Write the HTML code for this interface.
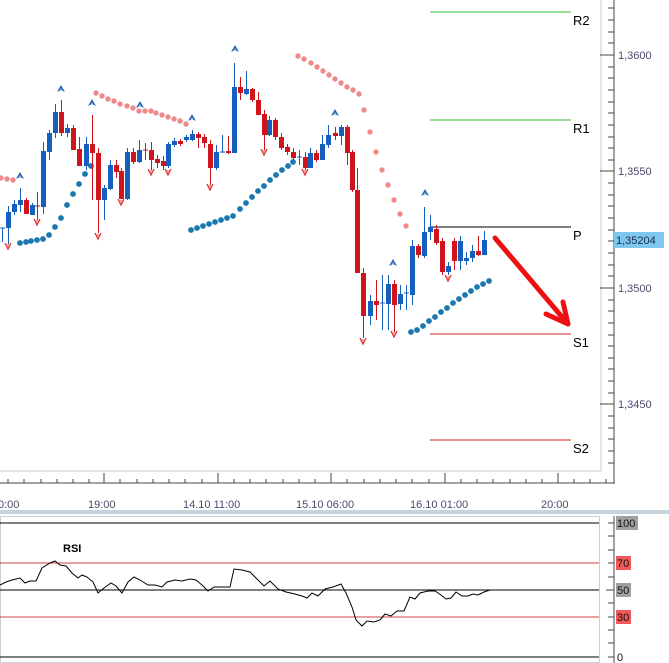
<!DOCTYPE html>
<html><head><meta charset="utf-8"><style>
html,body{margin:0;padding:0;background:#fff;width:669px;height:663px;overflow:hidden}
svg{display:block}
text{font-family:"Liberation Sans",sans-serif}
</style></head><body>
<svg width="669" height="663" viewBox="0 0 669 663" xmlns="http://www.w3.org/2000/svg">
<defs>
<g id="dn"><path d="M-3,-5 L0,1 L3,-5" fill="none" stroke="#e03030" stroke-width="1.3"/><path d="M-2,-4 L0,-1 L2,-4" fill="#f3a0a0"/></g>
<g id="up"><path d="M-4,3 L0,-4 L4,3 L0,1 Z" fill="#2a62b8"/><path d="M-1,1 L0,-1 L1,1" fill="#9cc4ee"/></g>
</defs>
<line x1="601" y1="0" x2="601" y2="471" stroke="#c8c8c8"/>
<line x1="0" y1="471" x2="601" y2="471" stroke="#c8c8c8"/>
<line x1="614" y1="0" x2="614" y2="484" stroke="#444"/>
<g stroke="#444">
<line x1="600" y1="55" x2="614" y2="55"/><line x1="600" y1="171" x2="614" y2="171"/><line x1="600" y1="288" x2="614" y2="288"/><line x1="600" y1="404" x2="614" y2="404"/>
<line x1="608" y1="8" x2="614" y2="8"/><line x1="608" y1="20" x2="614" y2="20"/><line x1="608" y1="32" x2="614" y2="32"/><line x1="608" y1="43" x2="614" y2="43"/>
<line x1="608" y1="67" x2="614" y2="67"/><line x1="608" y1="78" x2="614" y2="78"/><line x1="608" y1="90" x2="614" y2="90"/><line x1="608" y1="102" x2="614" y2="102"/><line x1="608" y1="113" x2="614" y2="113"/><line x1="608" y1="125" x2="614" y2="125"/><line x1="608" y1="137" x2="614" y2="137"/><line x1="608" y1="148" x2="614" y2="148"/><line x1="608" y1="160" x2="614" y2="160"/>
<line x1="608" y1="183" x2="614" y2="183"/><line x1="608" y1="195" x2="614" y2="195"/><line x1="608" y1="206" x2="614" y2="206"/><line x1="608" y1="218" x2="614" y2="218"/><line x1="608" y1="230" x2="614" y2="230"/><line x1="608" y1="241" x2="614" y2="241"/><line x1="608" y1="253" x2="614" y2="253"/><line x1="608" y1="265" x2="614" y2="265"/><line x1="608" y1="276" x2="614" y2="276"/>
<line x1="608" y1="300" x2="614" y2="300"/><line x1="608" y1="311" x2="614" y2="311"/><line x1="608" y1="323" x2="614" y2="323"/><line x1="608" y1="335" x2="614" y2="335"/><line x1="608" y1="346" x2="614" y2="346"/><line x1="608" y1="358" x2="614" y2="358"/><line x1="608" y1="369" x2="614" y2="369"/><line x1="608" y1="381" x2="614" y2="381"/><line x1="608" y1="393" x2="614" y2="393"/>
<line x1="608" y1="416" x2="614" y2="416"/><line x1="608" y1="428" x2="614" y2="428"/><line x1="608" y1="439" x2="614" y2="439"/><line x1="608" y1="451" x2="614" y2="451"/><line x1="608" y1="463" x2="614" y2="463"/>
</g>
<g font-size="11" fill="#4a4a70">
<text x="618" y="59">1,3600</text><text x="618" y="175">1,3550</text><text x="618" y="292">1,3500</text><text x="618" y="408">1,3450</text>
</g>
<rect x="614" y="232" width="50" height="16" fill="#7ec8f0"/>
<text x="616" y="244" font-size="11" fill="#1a2a50">1,35204</text>
<line x1="0" y1="483" x2="614" y2="483" stroke="#444"/>
<g stroke="#444">
<line x1="104" y1="473" x2="104" y2="483"/><line x1="218" y1="473" x2="218" y2="483"/><line x1="331" y1="473" x2="331" y2="483"/><line x1="445" y1="473" x2="445" y2="483"/><line x1="558" y1="473" x2="558" y2="483"/><line x1="614" y1="473" x2="614" y2="483"/>
<line x1="8" y1="479" x2="8" y2="483"/><line x1="24" y1="479" x2="24" y2="483"/><line x1="41" y1="479" x2="41" y2="483"/><line x1="57" y1="479" x2="57" y2="483"/><line x1="73" y1="479" x2="73" y2="483"/><line x1="89" y1="479" x2="89" y2="483"/>
<line x1="120" y1="479" x2="120" y2="483"/><line x1="137" y1="479" x2="137" y2="483"/><line x1="153" y1="479" x2="153" y2="483"/><line x1="169" y1="479" x2="169" y2="483"/><line x1="185" y1="479" x2="185" y2="483"/><line x1="202" y1="479" x2="202" y2="483"/>
<line x1="234" y1="479" x2="234" y2="483"/><line x1="250" y1="479" x2="250" y2="483"/><line x1="266" y1="479" x2="266" y2="483"/><line x1="283" y1="479" x2="283" y2="483"/><line x1="299" y1="479" x2="299" y2="483"/><line x1="315" y1="479" x2="315" y2="483"/>
<line x1="347" y1="479" x2="347" y2="483"/><line x1="364" y1="479" x2="364" y2="483"/><line x1="380" y1="479" x2="380" y2="483"/><line x1="396" y1="479" x2="396" y2="483"/><line x1="412" y1="479" x2="412" y2="483"/><line x1="429" y1="479" x2="429" y2="483"/>
<line x1="461" y1="479" x2="461" y2="483"/><line x1="477" y1="479" x2="477" y2="483"/><line x1="493" y1="479" x2="493" y2="483"/><line x1="510" y1="479" x2="510" y2="483"/><line x1="526" y1="479" x2="526" y2="483"/><line x1="542" y1="479" x2="542" y2="483"/>
<line x1="574" y1="479" x2="574" y2="483"/><line x1="590" y1="479" x2="590" y2="483"/><line x1="606" y1="479" x2="606" y2="483"/>
</g>
<g font-size="11" fill="#4a4a70">
<text x="-2" y="508">0:00</text><text x="88" y="508">19:00</text><text x="183" y="508">14.10 11:00</text><text x="296" y="508">15.10 06:00</text><text x="410" y="508">16.10 01:00</text><text x="541" y="508">20:00</text>
</g>
<rect x="0" y="510" width="669" height="4" fill="#c8d2dc"/>

<line x1="430" y1="12" x2="571" y2="12" stroke="#30c030"/>
<line x1="430" y1="120" x2="571" y2="120" stroke="#30c030"/>
<line x1="430" y1="227" x2="571" y2="227" stroke="#000"/>
<line x1="430" y1="334" x2="571" y2="334" stroke="#d02020"/>
<line x1="430" y1="440" x2="571" y2="440" stroke="#d02020"/>
<g font-size="13" fill="#000">
<text x="573" y="25">R2</text><text x="573" y="133">R1</text><text x="573" y="240">P</text><text x="573" y="347">S1</text><text x="573" y="453">S2</text>
</g>

<g fill="#f08a8a">
<circle cx="1" cy="178" r="2.7"/><circle cx="7" cy="179" r="2.7"/><circle cx="13" cy="180" r="2.7"/>
<circle cx="96" cy="93" r="2.7"/><circle cx="102" cy="96" r="2.7"/><circle cx="108" cy="99" r="2.7"/><circle cx="114" cy="101" r="2.7"/><circle cx="120" cy="104" r="2.7"/><circle cx="127" cy="106" r="2.7"/><circle cx="133" cy="108" r="2.7"/><circle cx="139" cy="111" r="2.7"/><circle cx="145" cy="111" r="2.7"/><circle cx="151" cy="111" r="2.7"/><circle cx="156" cy="113" r="2.7"/><circle cx="162" cy="115" r="2.7"/><circle cx="168" cy="117" r="2.7"/><circle cx="174" cy="119" r="2.7"/><circle cx="180" cy="121" r="2.7"/><circle cx="186" cy="124" r="2.7"/>
<circle cx="298" cy="56" r="2.7"/><circle cx="304" cy="59" r="2.7"/><circle cx="311" cy="63" r="2.7"/><circle cx="317" cy="67" r="2.7"/><circle cx="323" cy="71" r="2.7"/><circle cx="329" cy="75" r="2.7"/><circle cx="335" cy="79" r="2.7"/><circle cx="341" cy="83" r="2.7"/><circle cx="347" cy="87" r="2.7"/><circle cx="353" cy="90" r="2.7"/><circle cx="359" cy="94" r="2.7"/>
<circle cx="364" cy="110" r="2.7"/><circle cx="370" cy="132" r="2.7"/><circle cx="376" cy="152" r="2.7"/><circle cx="382" cy="170" r="2.7"/><circle cx="388" cy="185" r="2.7"/><circle cx="394" cy="200" r="2.7"/><circle cx="400" cy="214" r="2.7"/><circle cx="406" cy="226" r="2.7"/>
</g>
<g fill="#1a78b0">
<circle cx="20" cy="243" r="2.9"/><circle cx="26" cy="242" r="2.9"/><circle cx="31" cy="241" r="2.9"/><circle cx="37" cy="240" r="2.9"/><circle cx="43" cy="239" r="2.9"/><circle cx="49" cy="235" r="2.9"/><circle cx="55" cy="227" r="2.9"/><circle cx="61" cy="218" r="2.9"/><circle cx="67" cy="205" r="2.9"/><circle cx="73" cy="194" r="2.9"/><circle cx="79" cy="184" r="2.9"/><circle cx="85" cy="174" r="2.9"/><circle cx="91" cy="166" r="2.9"/>
<circle cx="191" cy="230" r="2.9"/><circle cx="197" cy="228" r="2.9"/><circle cx="203" cy="226" r="2.9"/><circle cx="209" cy="224" r="2.9"/><circle cx="215" cy="222" r="2.9"/><circle cx="221" cy="220" r="2.9"/><circle cx="227" cy="218" r="2.9"/><circle cx="233" cy="216" r="2.9"/><circle cx="240" cy="209" r="2.9"/><circle cx="246" cy="203" r="2.9"/><circle cx="252" cy="197" r="2.9"/><circle cx="258" cy="191" r="2.9"/><circle cx="264" cy="186" r="2.9"/><circle cx="270" cy="180" r="2.9"/><circle cx="276" cy="175" r="2.9"/><circle cx="282" cy="170" r="2.9"/><circle cx="288" cy="166" r="2.9"/><circle cx="293" cy="162" r="2.9"/>
<circle cx="411" cy="332" r="2.9"/><circle cx="417" cy="330" r="2.9"/><circle cx="423" cy="326" r="2.9"/><circle cx="429" cy="321" r="2.9"/><circle cx="435" cy="317" r="2.9"/><circle cx="441" cy="312" r="2.9"/><circle cx="447" cy="308" r="2.9"/><circle cx="453" cy="303" r="2.9"/><circle cx="459" cy="299" r="2.9"/><circle cx="465" cy="295" r="2.9"/><circle cx="471" cy="291" r="2.9"/><circle cx="477" cy="287" r="2.9"/><circle cx="483" cy="284" r="2.9"/><circle cx="489" cy="281" r="2.9"/>
</g>

<g stroke="#1560bd" fill="#1560bd">
<line x1="2.5" y1="228" x2="2.5" y2="242"/><line x1="0" y1="228" x2="5" y2="228"/>
<line x1="8.5" y1="206" x2="8.5" y2="245"/><rect x="6" y="212" width="5" height="16" stroke="none"/>
<line x1="14.5" y1="200" x2="14.5" y2="215"/><rect x="12" y="204" width="5" height="8" stroke="none"/>
<line x1="20.5" y1="188" x2="20.5" y2="212"/><rect x="18" y="200" width="5" height="5" stroke="none"/>
<line x1="32.5" y1="203" x2="32.5" y2="215"/><rect x="30" y="205" width="5" height="10" stroke="none"/>
<line x1="43.5" y1="142" x2="43.5" y2="214"/><rect x="41" y="151" width="5" height="56" stroke="none"/>
<line x1="49.5" y1="130" x2="49.5" y2="160"/><rect x="47" y="133" width="5" height="19" stroke="none"/>
<line x1="55.5" y1="104" x2="55.5" y2="138"/><rect x="53" y="112" width="5" height="21" stroke="none"/>
<line x1="67.5" y1="124" x2="67.5" y2="137"/><rect x="65" y="128" width="5" height="5" stroke="none"/>
<line x1="86.5" y1="137" x2="86.5" y2="170"/><rect x="84" y="144" width="5" height="22" stroke="none"/>
<line x1="104.5" y1="185" x2="104.5" y2="220"/><rect x="102" y="188" width="5" height="12" stroke="none"/>
<line x1="110.5" y1="160" x2="110.5" y2="190"/><rect x="108" y="165" width="5" height="24" stroke="none"/>
<line x1="127.5" y1="148" x2="127.5" y2="200"/><rect x="125" y="152" width="5" height="47" stroke="none"/>
<line x1="139.5" y1="140" x2="139.5" y2="163"/><rect x="137" y="150" width="5" height="12" stroke="none"/>
<line x1="168.5" y1="142" x2="168.5" y2="168"/><rect x="166" y="144" width="5" height="22" stroke="none"/>
<line x1="174.5" y1="138" x2="174.5" y2="147"/><rect x="172" y="141" width="5" height="4" stroke="none"/>
<line x1="186.5" y1="135" x2="186.5" y2="142"/><rect x="184" y="137" width="5" height="3" stroke="none"/>
<line x1="192.5" y1="130" x2="192.5" y2="141"/><rect x="190" y="134" width="5" height="6" stroke="none"/>
<line x1="216.5" y1="145" x2="216.5" y2="170"/><rect x="214" y="152" width="5" height="16" stroke="none"/>
<line x1="222.5" y1="135" x2="222.5" y2="153"/><line x1="220" y1="152" x2="225" y2="152"/>
<line x1="234.5" y1="63" x2="234.5" y2="153"/><rect x="232" y="87" width="5" height="66" stroke="none"/>
<line x1="246.5" y1="71" x2="246.5" y2="95"/><rect x="244" y="89" width="5" height="5" stroke="none"/>
<line x1="269.5" y1="116" x2="269.5" y2="136"/><rect x="267" y="120" width="5" height="15" stroke="none"/>
<line x1="299.5" y1="150" x2="299.5" y2="165"/><line x1="297" y1="157" x2="302" y2="157"/>
<line x1="310.5" y1="148" x2="310.5" y2="168"/><rect x="308" y="153" width="5" height="15" stroke="none"/>
<line x1="322.5" y1="135" x2="322.5" y2="160"/><rect x="320" y="144" width="5" height="16" stroke="none"/>
<line x1="328.5" y1="125" x2="328.5" y2="148"/><rect x="326" y="135" width="5" height="10" stroke="none"/>
<line x1="341.5" y1="125" x2="341.5" y2="145"/><rect x="339" y="127" width="5" height="9" stroke="none"/>
<line x1="370.5" y1="295" x2="370.5" y2="325"/><rect x="368" y="301" width="5" height="15" stroke="none"/>
<line x1="382.5" y1="275" x2="382.5" y2="330"/><line x1="380" y1="303" x2="385" y2="303"/>
<line x1="388.5" y1="275" x2="388.5" y2="330"/><rect x="386" y="284" width="5" height="20" stroke="none"/>
<line x1="400.5" y1="285" x2="400.5" y2="310"/><rect x="398" y="294" width="5" height="10" stroke="none"/>
<line x1="406.5" y1="285" x2="406.5" y2="310"/><line x1="404" y1="293" x2="409" y2="293"/>
<line x1="412.5" y1="240" x2="412.5" y2="305"/><rect x="410" y="246" width="5" height="49" stroke="none"/>
<line x1="424.5" y1="207" x2="424.5" y2="258"/><rect x="422" y="232" width="5" height="24" stroke="none"/>
<line x1="430.5" y1="215" x2="430.5" y2="240"/><rect x="428" y="227" width="5" height="5" stroke="none"/>
<line x1="448.5" y1="262" x2="448.5" y2="275"/><rect x="446" y="266" width="5" height="6" stroke="none"/>
<line x1="460.5" y1="236" x2="460.5" y2="270"/><rect x="458" y="241" width="5" height="20" stroke="none"/>
<line x1="466.5" y1="252" x2="466.5" y2="265"/><rect x="464" y="258" width="5" height="3" stroke="none"/>
<line x1="472.5" y1="245" x2="472.5" y2="262"/><rect x="470" y="251" width="5" height="7" stroke="none"/>
<line x1="484.5" y1="231" x2="484.5" y2="255"/><rect x="482" y="240" width="5" height="15" stroke="none"/>
</g>
<g stroke="#d0141c" fill="#d0141c">
<line x1="26.5" y1="198" x2="26.5" y2="214"/><rect x="24" y="200" width="5" height="14" stroke="none"/>
<line x1="37.5" y1="192" x2="37.5" y2="220"/><line x1="35" y1="206" x2="40" y2="206"/>
<line x1="61.5" y1="100" x2="61.5" y2="136"/><rect x="59" y="112" width="5" height="21" stroke="none"/>
<line x1="73.5" y1="125" x2="73.5" y2="150"/><rect x="71" y="128" width="5" height="22" stroke="none"/>
<line x1="79.5" y1="137" x2="79.5" y2="166"/><rect x="77" y="149" width="5" height="17" stroke="none"/>
<line x1="92.5" y1="115" x2="92.5" y2="200"/><rect x="90" y="144" width="5" height="9" stroke="none"/>
<line x1="98.5" y1="148" x2="98.5" y2="233"/><rect x="96" y="153" width="5" height="47" stroke="none"/>
<line x1="116.5" y1="160" x2="116.5" y2="178"/><rect x="114" y="165" width="5" height="7" stroke="none"/>
<line x1="121.5" y1="168" x2="121.5" y2="199"/><rect x="119" y="171" width="5" height="28" stroke="none"/>
<line x1="133.5" y1="148" x2="133.5" y2="164"/><rect x="131" y="152" width="5" height="10" stroke="none"/>
<line x1="145.5" y1="143" x2="145.5" y2="160"/><line x1="143" y1="150" x2="148" y2="150"/>
<line x1="151.5" y1="142" x2="151.5" y2="170"/><rect x="149" y="150" width="5" height="10" stroke="none"/>
<line x1="157.5" y1="155" x2="157.5" y2="168"/><rect x="155" y="159" width="5" height="4" stroke="none"/>
<line x1="163.5" y1="156" x2="163.5" y2="170"/><rect x="161" y="161" width="5" height="5" stroke="none"/>
<line x1="180.5" y1="139" x2="180.5" y2="146"/><rect x="178" y="141" width="5" height="3" stroke="none"/>
<line x1="198.5" y1="132" x2="198.5" y2="148"/><rect x="196" y="134" width="5" height="4" stroke="none"/>
<line x1="204.5" y1="134" x2="204.5" y2="148"/><rect x="202" y="137" width="5" height="6" stroke="none"/>
<line x1="210.5" y1="140" x2="210.5" y2="185"/><rect x="208" y="144" width="5" height="24" stroke="none"/>
<line x1="228.5" y1="136" x2="228.5" y2="154"/><rect x="226" y="151" width="5" height="2" stroke="none"/>
<line x1="240.5" y1="77" x2="240.5" y2="100"/><rect x="238" y="87" width="5" height="6" stroke="none"/>
<line x1="252.5" y1="88" x2="252.5" y2="102"/><rect x="250" y="89" width="5" height="11" stroke="none"/>
<line x1="258.5" y1="92" x2="258.5" y2="115"/><rect x="256" y="100" width="5" height="15" stroke="none"/>
<line x1="264.5" y1="110" x2="264.5" y2="150"/><rect x="262" y="114" width="5" height="21" stroke="none"/>
<line x1="275.5" y1="118" x2="275.5" y2="140"/><rect x="273" y="120" width="5" height="17" stroke="none"/>
<line x1="281.5" y1="133" x2="281.5" y2="150"/><rect x="279" y="137" width="5" height="11" stroke="none"/>
<line x1="287.5" y1="144" x2="287.5" y2="155"/><rect x="285" y="147" width="5" height="5" stroke="none"/>
<line x1="293.5" y1="148" x2="293.5" y2="160"/><rect x="291" y="152" width="5" height="6" stroke="none"/>
<line x1="305.5" y1="152" x2="305.5" y2="170"/><rect x="303" y="157" width="5" height="11" stroke="none"/>
<line x1="316.5" y1="150" x2="316.5" y2="162"/><rect x="314" y="153" width="5" height="7" stroke="none"/>
<line x1="335.5" y1="127" x2="335.5" y2="140"/><rect x="333" y="133" width="5" height="3" stroke="none"/>
<line x1="347.5" y1="125" x2="347.5" y2="165"/><rect x="345" y="127" width="5" height="26" stroke="none"/>
<line x1="352.5" y1="150" x2="352.5" y2="192"/><rect x="350" y="152" width="5" height="38" stroke="none"/>
<line x1="357.5" y1="168" x2="357.5" y2="273"/><rect x="355" y="190" width="5" height="83" stroke="none"/>
<line x1="363.5" y1="268" x2="363.5" y2="338"/><rect x="361" y="273" width="5" height="43" stroke="none"/>
<line x1="376.5" y1="280" x2="376.5" y2="320"/><rect x="374" y="301" width="5" height="4" stroke="none"/>
<line x1="394.5" y1="280" x2="394.5" y2="332"/><rect x="392" y="284" width="5" height="21" stroke="none"/>
<line x1="418.5" y1="244" x2="418.5" y2="258"/><rect x="416" y="246" width="5" height="9" stroke="none"/>
<line x1="436.5" y1="225" x2="436.5" y2="245"/><rect x="434" y="229" width="5" height="14" stroke="none"/>
<line x1="442.5" y1="238" x2="442.5" y2="275"/><rect x="440" y="241" width="5" height="31" stroke="none"/>
<line x1="454.5" y1="238" x2="454.5" y2="270"/><rect x="452" y="241" width="5" height="20" stroke="none"/>
<line x1="478.5" y1="236" x2="478.5" y2="256"/><rect x="476" y="251" width="5" height="4" stroke="none"/>
</g>
<use href="#dn" x="8" y="248"/><use href="#dn" x="37" y="224"/><use href="#dn" x="98" y="238"/><use href="#dn" x="121" y="204"/><use href="#dn" x="151" y="174"/><use href="#dn" x="168" y="174"/><use href="#dn" x="210" y="189"/><use href="#dn" x="264" y="154"/><use href="#dn" x="305" y="174"/><use href="#dn" x="363" y="343"/><use href="#dn" x="394" y="336"/><use href="#dn" x="448" y="280"/>
<use href="#up" x="61" y="89"/><use href="#up" x="92" y="103"/><use href="#up" x="140" y="105"/><use href="#up" x="192" y="118"/><use href="#up" x="235" y="49"/><use href="#up" x="20" y="176"/><use href="#up" x="335" y="113"/><use href="#up" x="393" y="263"/><use href="#up" x="425" y="193"/>

<g stroke="#ee1010" stroke-width="5" stroke-linecap="round" stroke-linejoin="round" fill="none">
<line x1="495" y1="238" x2="568" y2="324"/>
<polyline points="546,314 568,324 563,302"/>
</g>

<rect x="0.5" y="516.5" width="599" height="146" fill="none" stroke="#c8d0d8"/>
<line x1="0" y1="523" x2="599" y2="523" stroke="#000"/>
<line x1="0" y1="563" x2="599" y2="563" stroke="#d04040"/>
<line x1="0" y1="590" x2="599" y2="590" stroke="#000"/>
<line x1="0" y1="617" x2="599" y2="617" stroke="#d04040"/>
<line x1="0" y1="657" x2="599" y2="657" stroke="#000"/>
<line x1="614" y1="516" x2="614" y2="663" stroke="#444"/>
<g stroke="#444">
<line x1="608" y1="523" x2="614" y2="523"/><line x1="608" y1="536" x2="614" y2="536"/><line x1="608" y1="550" x2="614" y2="550"/><line x1="608" y1="563" x2="614" y2="563"/><line x1="608" y1="577" x2="614" y2="577"/><line x1="606" y1="590" x2="614" y2="590"/><line x1="608" y1="603" x2="614" y2="603"/><line x1="608" y1="617" x2="614" y2="617"/><line x1="608" y1="630" x2="614" y2="630"/><line x1="608" y1="643" x2="614" y2="643"/><line x1="608" y1="657" x2="614" y2="657"/>
</g>
<rect x="616" y="516" width="22" height="14" fill="#a0a0a0"/><text x="617" y="527" font-size="11" fill="#111">100</text>
<rect x="616" y="556" width="15" height="14" fill="#f05a5a"/><text x="617" y="567" font-size="11" fill="#111">70</text>
<rect x="616" y="583" width="15" height="14" fill="#a0a0a0"/><text x="617" y="594" font-size="11" fill="#111">50</text>
<rect x="616" y="610" width="15" height="14" fill="#f05a5a"/><text x="617" y="621" font-size="11" fill="#111">30</text>
<text x="617" y="661" font-size="11" fill="#111">0</text>
<text x="63" y="552" font-size="11" font-weight="bold" fill="#000">RSI</text>
<polyline fill="none" stroke="#000" stroke-width="1" points="0,585 6,582 12,580 20,578 25,583 30,581 36,581 42,568 50,563 55,561 60,565 66,566 72,573 78,578 82,575 87,577 93,582 98,593 104,588 111,583 116,586 122,593 128,582 134,577 140,580 148,585 155,585 162,587 167,582 175,580 182,581 190,579 196,580 202,585 208,591 214,587 222,587 230,587 234,569 242,570 250,572 258,580 264,586 270,581 278,589 286,592 295,594 302,596 307,598 312,593 318,596 325,589 333,587 341,584 346,593 352,607 356,620 362,626 367,621 374,622 380,620 385,614 391,616 397,611 404,611 410,597 415,599 420,593 428,591 435,591 441,595 446,599 451,598 456,592 462,596 468,596 473,594 478,595 484,592 490,590"/>
</svg>
</body></html>
